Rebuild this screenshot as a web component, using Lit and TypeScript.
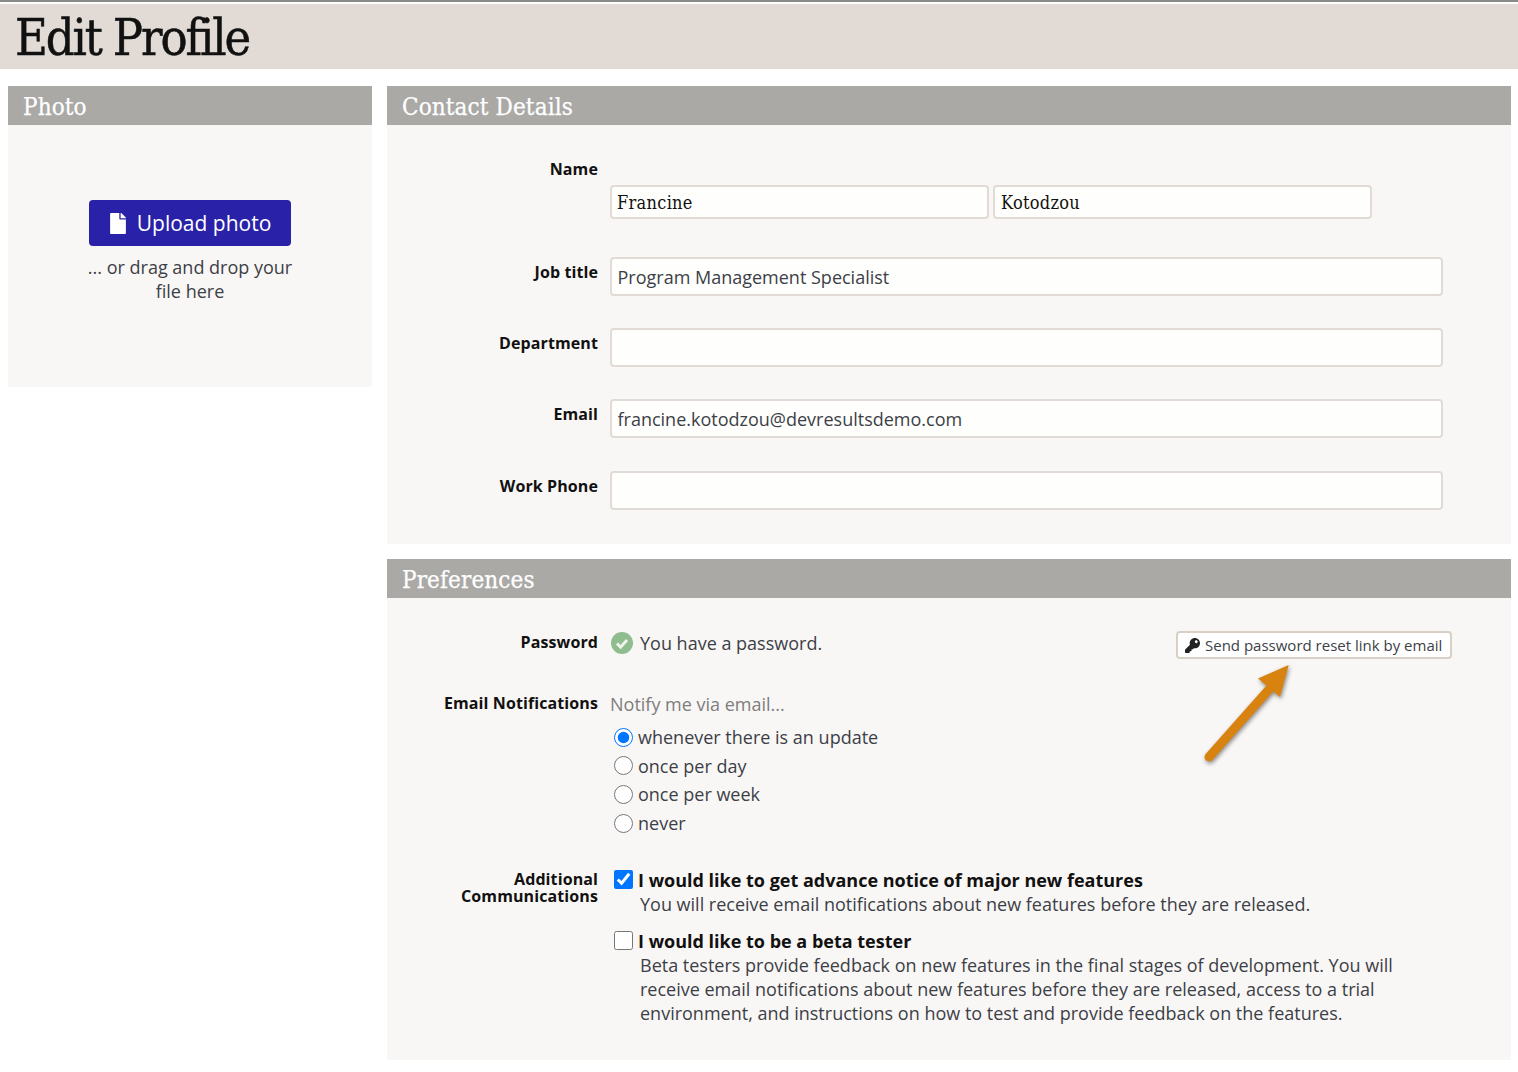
import { LitElement, html, css } from "lit";
import { customElement } from "lit/decorators.js";

@customElement("app-root")
export class AppRoot extends LitElement {
  static styles = css`
    :host { display: block; font-family: "Open Sans", sans-serif; color: #3c3f47; font-size: 18px; position: relative; height: 1072px; background: #fff; overflow: hidden; }
    * { box-sizing: border-box; }
    .topline { height: 2px; background: #8a8a88; margin-bottom: 2px; }
    header { height: 65px; background: #e2dbd5; padding-left: 15px; display: flex; align-items: center; }
    h1 { margin: 0; padding-top: 4px; font-family: "DejaVu Serif Condensed", "DejaVu Serif", serif; font-weight: 400; font-size: 50px; line-height: 65px; color: #111; letter-spacing: -2.1px; -webkit-text-stroke: 0.5px #111; }
    .columns { display: flex; gap: 15px; padding: 17px 7px 0 8px; align-items: flex-start; }
    .left { width: 364px; flex: none; }
    .right { flex: 1; display: flex; flex-direction: column; gap: 15px; }
    .panel-title { height: 39px; background: #aaa9a6; color: #fff; padding-left: 15px; font-family: "DejaVu Serif Condensed", "DejaVu Serif", serif; font-size: 24px; line-height: 42px; letter-spacing: 0.12px; -webkit-text-stroke: 0.25px #fff; }
    .panel-body { background: #f9f7f5; }
    .photo-body { height: 262px; padding-top: 75px; display: flex; flex-direction: column; align-items: center; }
    .upload { width: 202px; height: 46px; background: #2922a8; color: #fff; border-radius: 4px; font-size: 21px; display: flex; align-items: center; justify-content: center; gap: 10px; }
    .upload svg { width: 18px; height: 21px; fill: #fff; }
    .drop { margin-top: 9px; width: 230px; text-align: center; line-height: 24px; }
    .contact { padding: 29px 68px 34px 0; display: flex; flex-direction: column; }
    .row { display: grid; grid-template-columns: 211px 1fr; column-gap: 12px; }
    .label { font-weight: 700; font-size: 16px; line-height: 17.6px; letter-spacing: 0.1px; text-align: right; color: #111; padding-top: 7px; }
    .label.tight { padding-top: 2px; }
    .name-fields { display: flex; gap: 4px; padding-top: 31px; }
    input.text { display: block; width: 100%; height: 39px; border: 2px solid #e2dbd5; border-radius: 4px; background: #fefefc; color: #3c3f47; font: 18px "Open Sans", sans-serif; padding: 0 6px 0 5.5px; outline: none; }
    .name-fields input.text { width: 379px; height: 34px; font-family: "DejaVu Serif Condensed", "DejaVu Serif", serif; color: #111; letter-spacing: 0.3px; padding-left: 5px; }
    .name-fields input.text.last { padding-left: 6px; }
    .mt38 { margin-top: 38px; }
    .mt32 { margin-top: 32px; }
    .mt33 { margin-top: 33px; }
    .mt34 { margin-top: 34px; }
    .mt31 { margin-top: 31px; }
    .prefs { height: 462px; padding-top: 29px; padding-right: 68px; display: flex; flex-direction: column; }
    .pw { display: flex; align-items: center; gap: 7px; height: 32px; line-height: 32px; position: relative; }
    .pw svg { width: 22px; height: 22px; margin-left: 1px; flex: none; }
    .notify { color: #7d7d7d; line-height: 24px; margin-top: -1px; }
    .resetbtn { position: absolute; right: -9px; top: 4px; width: 276px; height: 28px; border: 2px solid #d8d0c4; border-radius: 4px; background: #fff; font-size: 15px; white-space: nowrap; display: flex; align-items: center; gap: 5px; padding-left: 7px; line-height: 1; }
    .resetbtn svg { width: 15px; height: 15px; margin: 0; fill: #222; }
    .opts { display: flex; flex-direction: column; margin-top: 6.8px; margin-bottom: 0.2px; padding-left: 4px; }
    .opt { display: flex; align-items: center; gap: 5px; height: 28.67px; }
    input[type="radio"], input[type="checkbox"] { margin: 0; width: 19px; height: 19px; flex: none; }
    .check { display: flex; align-items: center; gap: 5px; padding-left: 4px; font-weight: 700; color: #111; height: 24px; line-height: 24px; }
    .check.first { margin-top: -1px; }
    .check.second { margin-top: 13px; }
    .sub { padding-left: 30px; line-height: 24px; width: 800px; }
    .arrow { position: absolute; left: 1190px; top: 655px; width: 110px; height: 120px; overflow: visible; filter: drop-shadow(1px 2px 2px rgba(0,0,0,.45)); }
  `;

  render() {
    return html`
      <div class="topline"></div>
      <header><h1>Edit Profile</h1></header>
      <div class="columns">
        <section class="left">
          <div class="panel-title">Photo</div>
          <div class="panel-body photo-body">
            <div class="upload">
              <svg viewBox="0 0 384 512"><path d="M224 136V0H24C10.7 0 0 10.7 0 24v464c0 13.3 10.7 24 24 24h336c13.3 0 24-10.7 24-24V160H248c-13.2 0-24-10.8-24-24zm160-14.1v6.1H256V0h6.1c6.4 0 12.5 2.5 17 7l97.9 98c4.5 4.5 7 10.6 7 16.9z"/></svg>
              Upload photo
            </div>
            <div class="drop">... or drag and drop your file here</div>
          </div>
        </section>
        <div class="right">
          <section>
            <div class="panel-title">Contact Details</div>
            <div class="panel-body contact">
              <div class="row">
                <div class="label">Name</div>
                <div class="name-fields">
                  <input class="text" .value=${"Francine"} />
                  <input class="text last" .value=${"Kotodzou"} />
                </div>
              </div>
              <div class="row mt38">
                <div class="label">Job title</div>
                <input class="text" .value=${"Program Management Specialist"} />
              </div>
              <div class="row mt32">
                <div class="label">Department</div>
                <input class="text" />
              </div>
              <div class="row mt32">
                <div class="label">Email</div>
                <input class="text" .value=${"francine.kotodzou@devresultsdemo.com"} />
              </div>
              <div class="row mt33">
                <div class="label">Work Phone</div>
                <input class="text" />
              </div>
            </div>
          </section>
          <section>
            <div class="panel-title">Preferences</div>
            <div class="panel-body prefs">
              <div class="row">
                <div class="label">Password</div>
                <div class="pw">
                  <svg viewBox="0 0 22 22"><circle cx="11" cy="11" r="11" fill="#90bd8f"/><path d="M6 11.5l3.6 3.6L16 8" fill="none" stroke="#f4f4ee" stroke-width="2.8"/></svg>
                  You have a password.
                  <div class="resetbtn">
                    <svg viewBox="0 0 512 512"><path d="M512 176.001C512 273.203 433.202 352 336 352c-11.22 0-22.19-1.062-32.827-3.069l-24.012 27.014A23.999 23.999 0 0 1 261.223 384H224v40c0 13.255-10.745 24-24 24h-40v40c0 13.255-10.745 24-24 24H24c-13.255 0-24-10.745-24-24v-78.059c0-6.365 2.529-12.47 7.029-16.971l161.802-161.802C163.108 213.814 160 195.271 160 176 160 78.798 238.797.001 335.999 0 433.488-.001 512 78.511 512 176.001zM336 128c0 26.51 21.49 48 48 48s48-21.49 48-48-21.49-48-48-48-48 21.49-48 48z"/></svg>
                    Send password reset link by email
                  </div>
                </div>
              </div>
              <div class="row mt34">
                <div class="label tight">Email Notifications</div>
                <div>
                  <div class="notify">Notify me via email...</div>
                  <div class="opts">
                    <label class="opt"><input type="radio" name="n" checked />whenever there is an update</label>
                    <label class="opt"><input type="radio" name="n" />once per day</label>
                    <label class="opt"><input type="radio" name="n" />once per week</label>
                    <label class="opt"><input type="radio" name="n" />never</label>
                  </div>
                </div>
              </div>
              <div class="row mt31">
                <div class="label tight">Additional Communications</div>
                <div>
                  <label class="check first"><input type="checkbox" checked />I would like to get advance notice of major new features</label>
                  <div class="sub">You will receive email notifications about new features before they are released.</div>
                  <label class="check second"><input type="checkbox" />I would like to be a beta tester</label>
                  <div class="sub">Beta testers provide feedback on new features in the final stages of development. You will receive email notifications about new features before they are released, access to a trial environment, and instructions on how to test and provide feedback on the features.</div>
                </div>
              </div>
            </div>
          </section>
        </div>
      </div>
      <svg class="arrow" viewBox="1190 655 110 120">
        <path d="M1209 757L1272 686" stroke="#d8830f" stroke-width="9" stroke-linecap="round" fill="none"/>
        <path d="M1288.7 665L1258 678.5L1280 697Z" fill="#d8830f"/>
      </svg>
    `;
  }
}
